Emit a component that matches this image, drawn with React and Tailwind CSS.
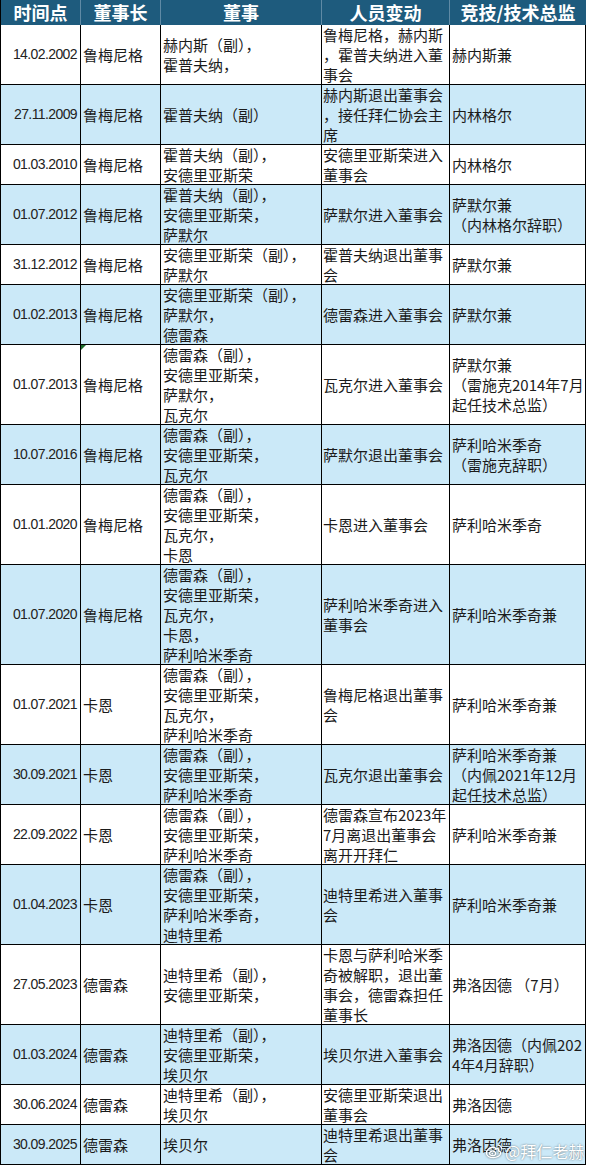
import React from "react";

// 拜仁董事会变动表
const rows = [
  ["14.02.2002", "鲁梅尼格", ["赫内斯（副），", "霍普夫纳，"], ["鲁梅尼格，赫内斯", "，霍普夫纳进入董", "事会"], ["赫内斯兼"]],
  ["27.11.2009", "鲁梅尼格", ["霍普夫纳（副）"], ["赫内斯退出董事会", "，接任拜仁协会主", "席"], ["内林格尔"]],
  ["01.03.2010", "鲁梅尼格", ["霍普夫纳（副），", "安德里亚斯荣"], ["安德里亚斯荣进入", "董事会"], ["内林格尔"]],
  ["01.07.2012", "鲁梅尼格", ["霍普夫纳（副），", "安德里亚斯荣，", "萨默尔"], ["萨默尔进入董事会"], ["萨默尔兼", "（内林格尔辞职）"]],
  ["31.12.2012", "鲁梅尼格", ["安德里亚斯荣（副），", "萨默尔"], ["霍普夫纳退出董事", "会"], ["萨默尔兼"]],
  ["01.02.2013", "鲁梅尼格", ["安德里亚斯荣（副），", "萨默尔，", "德雷森"], ["德雷森进入董事会"], ["萨默尔兼"]],
  ["01.07.2013", "鲁梅尼格", ["德雷森（副），", "安德里亚斯荣，", "萨默尔，", "瓦克尔"], ["瓦克尔进入董事会"], ["萨默尔兼", "（雷施克2014年7月", "起任技术总监）"]],
  ["10.07.2016", "鲁梅尼格", ["德雷森（副），", "安德里亚斯荣，", "瓦克尔"], ["萨默尔退出董事会"], ["萨利哈米季奇", "（雷施克辞职）"]],
  ["01.01.2020", "鲁梅尼格", ["德雷森（副），", "安德里亚斯荣，", "瓦克尔，", "卡恩"], ["卡恩进入董事会"], ["萨利哈米季奇"]],
  ["01.07.2020", "鲁梅尼格", ["德雷森（副），", "安德里亚斯荣，", "瓦克尔，", "卡恩，", "萨利哈米季奇"], ["萨利哈米季奇进入", "董事会"], ["萨利哈米季奇兼"]],
  ["01.07.2021", "卡恩", ["德雷森（副），", "安德里亚斯荣，", "瓦克尔，", "萨利哈米季奇"], ["鲁梅尼格退出董事", "会"], ["萨利哈米季奇兼"]],
  ["30.09.2021", "卡恩", ["德雷森（副），", "安德里亚斯荣，", "萨利哈米季奇"], ["瓦克尔退出董事会"], ["萨利哈米季奇兼", "（内佩2021年12月", "起任技术总监）"]],
  ["22.09.2022", "卡恩", ["德雷森（副），", "安德里亚斯荣，", "萨利哈米季奇"], ["德雷森宣布2023年", "7月离退出董事会", "离开开拜仁"], ["萨利哈米季奇兼"]],
  ["01.04.2023", "卡恩", ["德雷森（副），", "安德里亚斯荣，", "萨利哈米季奇，", "迪特里希"], ["迪特里希进入董事", "会"], ["萨利哈米季奇兼"]],
  ["27.05.2023", "德雷森", ["迪特里希（副），", "安德里亚斯荣，"], ["卡恩与萨利哈米季", "奇被解职，退出董", "事会，德雷森担任", "董事长"], ["弗洛因德 （7月）"]],
  ["01.03.2024", "德雷森", ["迪特里希（副），", "安德里亚斯荣，", "埃贝尔"], ["埃贝尔进入董事会"], ["弗洛因德（内佩202", "4年4月辞职）"]],
  ["30.06.2024", "德雷森", ["迪特里希（副），", "埃贝尔"], ["安德里亚斯荣退出", "董事会"], ["弗洛因德"]],
  ["30.09.2025", "德雷森", ["埃贝尔"], ["迪特里希退出董事", "会"], ["弗洛因德"]],
];

const heights = {
  1: "h-[20px]",
  2: "h-[40px]",
  3: "h-[60px]",
  4: "h-[80px]",
  5: "h-[100px]",
};

const cjk = { fontFamily: '"Noto Sans CJK SC", "Noto Sans", sans-serif' };

const Lines = ({ lines }) => (
  <div className="flex flex-col">
    {lines.map((l, i) => (
      <span key={i} className="whitespace-nowrap leading-[20px]">
        {l}
      </span>
    ))}
  </div>
);

const WeiboMark = () => (
  <svg width="19" height="17" viewBox="0 0 20 18" className="shrink-0 drop-shadow-[0_0_1px_rgba(0,0,0,0.6)]">
    <path
      d="M8.5 4.5C5 4.5 1.5 7.5 1.5 10.5c0 3 3.3 5 7.3 5s7.7-2.3 7.7-4.9c0-1.6-1.4-2.2-2.3-2.4.5-1.2.3-2.5-1.7-2.1-1 .2-1.5.6-1.6.6.3-1.2.2-2.2-2.4-2.2z"
      fill="none"
      stroke="white"
      strokeWidth="1.4"
    />
    <ellipse cx="8" cy="11" rx="3.2" ry="2.4" fill="none" stroke="white" strokeWidth="1.2" />
    <circle cx="7.6" cy="11.2" r="0.9" fill="white" />
    <path d="M14 2.2c1.8.2 3.2 1.6 3.4 3.4" fill="none" stroke="white" strokeWidth="1.3" strokeLinecap="round" />
  </svg>
);

export default function App() {
  return (
    <div className="relative w-[589px] h-[1166px] overflow-hidden bg-white text-[#1b1b1b]" style={cjk}>
      <div className="w-[586px] border-l border-black">
        {/* Header */}
        <div className="flex h-[25px] bg-[#1e5b7d] text-white font-bold text-[18px] leading-[25px]">
          <div className="w-[80px] text-center border-r border-[#5f8aa5]">时间点</div>
          <div className="w-[80px] text-center border-r border-[#5f8aa5]">董事长</div>
          <div className="w-[161px] text-center border-r border-[#5f8aa5]">董事</div>
          <div className="w-[128px] text-center border-r border-[#5f8aa5]">人员变动</div>
          <div className="w-[136px] text-center">竞技/技术总监</div>
        </div>

        {/* Rows */}
        {rows.map(([date, chair, board, change, sport], i) => {
          const n = Math.max(board.length, change.length, sport.length);
          return (
            <div
              key={date}
              className={`flex border-b border-black text-[15px] ${heights[n]} ${
                i % 2 === 0 ? "bg-white" : "bg-[#cbe9f8]"
              }`}
            >
              <div
                className="w-[80px] flex items-center justify-end pr-[3px] border-r border-black text-[14px] tracking-[-0.6px] text-[#222]"
                style={{ fontFamily: '"Liberation Sans", Arial, sans-serif' }}
              >
                {date}
              </div>
              <div className="relative w-[80px] flex items-center pl-[2px] border-r border-black">
                {date === "01.07.2013" && (
                  <div className="absolute left-0 top-0 w-0 h-0 border-t-[5px] border-t-[#1d6b2a] border-r-[5px] border-r-transparent" />
                )}
                <Lines lines={[chair]} />
              </div>
              <div className="w-[161px] flex items-center pl-[2px] border-r border-black">
                <Lines lines={board} />
              </div>
              <div className="w-[128px] flex items-center pl-[1px] border-r border-black">
                <Lines lines={change} />
              </div>
              <div className="w-[136px] flex items-center pl-[2px] border-r border-black">
                <Lines lines={sport} />
              </div>
            </div>
          );
        })}
      </div>

      {/* Watermark */}
      <div className="absolute left-[485px] top-[1140px] flex items-center gap-[1px] whitespace-nowrap text-white text-[16px] leading-[22px] [text-shadow:0_0_2px_rgba(0,0,0,0.55)]">
        <WeiboMark />
        <span>@拜仁老赫</span>
      </div>
    </div>
  );
}
